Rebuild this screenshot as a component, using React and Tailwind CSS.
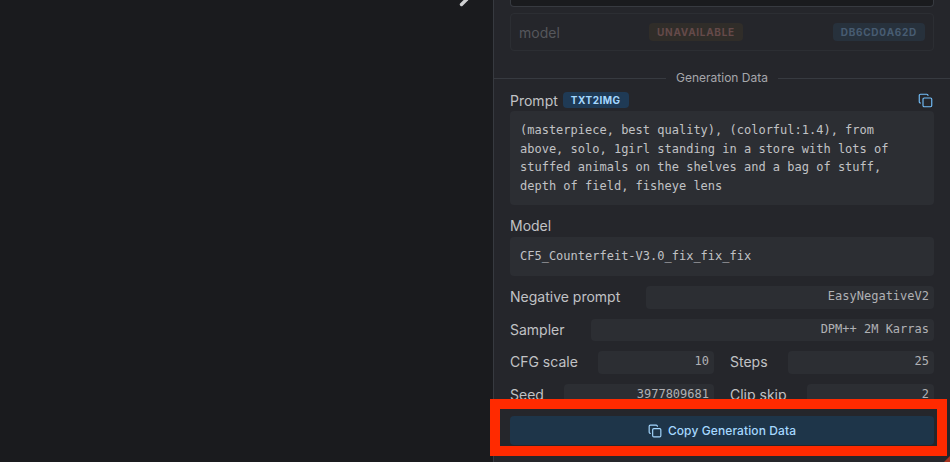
import { Copy } from 'lucide-react';

const mono = 'font-["DejaVu_Sans_Mono","Liberation_Mono",monospace]';

function Row({ label, value, gap = 'gap-[20px]' }) {
  return (
    <div className={`flex items-center flex-1 min-w-0 ${gap}`}>
      <span className="text-[14px] text-[#c1c2c5] whitespace-nowrap leading-[22px]">{label}</span>
      <div className={`flex-1 min-w-0 h-[22.6px] rounded bg-[#2c2e33] px-[5px] text-right text-[12px] leading-[20px] text-[#b0b1b5] ${mono}`}>
        {value}
      </div>
    </div>
  );
}

export default function App() {
  return (
    <div className='relative w-[950px] h-[462px] overflow-hidden flex bg-[#1a1b1e] font-["Inter","Liberation_Sans",sans-serif]'>
      <div className="w-[493px] shrink-0 relative">
        <svg className="absolute left-[458px] top-0" width="14" height="8" viewBox="0 0 14 8" fill="none">
          <path d="M3.5 4.5 L9 -1" stroke="#cfd0d2" strokeWidth="3.4" strokeLinecap="round" />
        </svg>
      </div>
      <div className="relative flex-1 min-w-0 h-full overflow-hidden border-l border-[#373a40] bg-[#25262b]">
        <div className="mx-[16px] h-[7px] rounded-b border border-t-0 border-[#373a40] bg-[#1a1b1e]" />
        <div className="mx-[16px] mt-[6px] h-[38px] rounded border border-[#2c2e33] flex items-center justify-between pl-[8px] pr-[8px]">
          <span className="text-[14px] text-[#55575c]">model</span>
          <div className="flex items-center gap-[90px]">
            <span className="h-[18px] px-[8px] rounded bg-[#302d29] text-[10px] font-bold tracking-[0.7px] leading-[18px] text-[#654a4a]">UNAVAILABLE</span>
            <span className="h-[18px] px-[8px] rounded bg-[#27313c] text-[10px] font-bold tracking-[0.7px] leading-[18px] text-[#475c72]">DB6CD0A62D</span>
          </div>
        </div>

        <div className="mt-[20px] flex items-center gap-[10px] h-[14px]">
          <div className="flex-1 border-t border-[#373a40]" />
          <span className="text-[12px] text-[#a6a7ab] leading-[14px]">Generation Data</span>
          <div className="flex-1 border-t border-[#373a40]" />
        </div>

        <div className="px-[16px] mt-[4px]">
          <div className="flex items-center h-[22px] gap-[5px]">
            <span className="text-[14px] text-[#c1c2c5]">Prompt</span>
            <span className="h-[16px] px-[8px] rounded bg-[#1f3a55] text-[10px] font-bold tracking-[0.5px] leading-[16px] text-[#a5d8ff]">TXT2IMG</span>
            <Copy className="ml-auto mr-[1px] text-[#74c0fc]" size={15} strokeWidth={1.8} />
          </div>
          <div className={`h-[94px] rounded bg-[#2c2e33] px-[10px] py-[10px] text-[12px] leading-[18.6px] text-[#c1c2c5] ${mono}`}>
            (masterpiece, best quality), (colorful:1.4), from<br />
            above, solo, 1girl standing in a store with lots of<br />
            stuffed animals on the shelves and a bag of stuff,<br />
            depth of field, fisheye lens
          </div>

          <div className="mt-[10px] text-[14px] leading-[22px] text-[#c1c2c5]">Model</div>
          <div className={`h-[39px] rounded bg-[#2c2e33] px-[10px] py-[10px] text-[12px] leading-[18.6px] text-[#c1c2c5] ${mono}`}>
            CF5_Counterfeit-V3.0_fix_fix_fix
          </div>

          <div className="mt-[10px] flex flex-col gap-[10px]">
            <Row label="Negative prompt" value="EasyNegativeV2" gap="gap-[26px]" />
            <Row label="Sampler" value="DPM++ 2M Karras" gap="gap-[26px]" />
            <div className="flex gap-[16px]">
              <Row label="CFG scale" value="10" />
              <Row label="Steps" value="25" />
            </div>
            <div className="flex gap-[16px]">
              <Row label="Seed" value="3977809681" />
              <Row label="Clip skip" value="2" />
            </div>
          </div>
        </div>

        <div className="absolute left-0 right-0 bottom-0 h-[53px] bg-[#25262b] px-[16px] pt-[7px]">
          <button className="w-full h-[29px] rounded bg-[#1e3549] flex items-center justify-center gap-[6px] text-[12px] tracking-[0.1px] font-medium text-[#a5d8ff]">
            <Copy size={14} strokeWidth={2} />
            Copy Generation Data
          </button>
        </div>
      </div>

      {/* red annotation box over the button */}
      <div className="absolute left-[490px] top-[399px] w-[457px] h-[57px] border-[10px] border-[#ff2a00]" />
      <svg className="absolute right-0 bottom-0" width="6" height="6" viewBox="0 0 6 6">
        <path d="M6 0 V6 H0 Z" fill="#a8341f" />
      </svg>
    </div>
  );
}
